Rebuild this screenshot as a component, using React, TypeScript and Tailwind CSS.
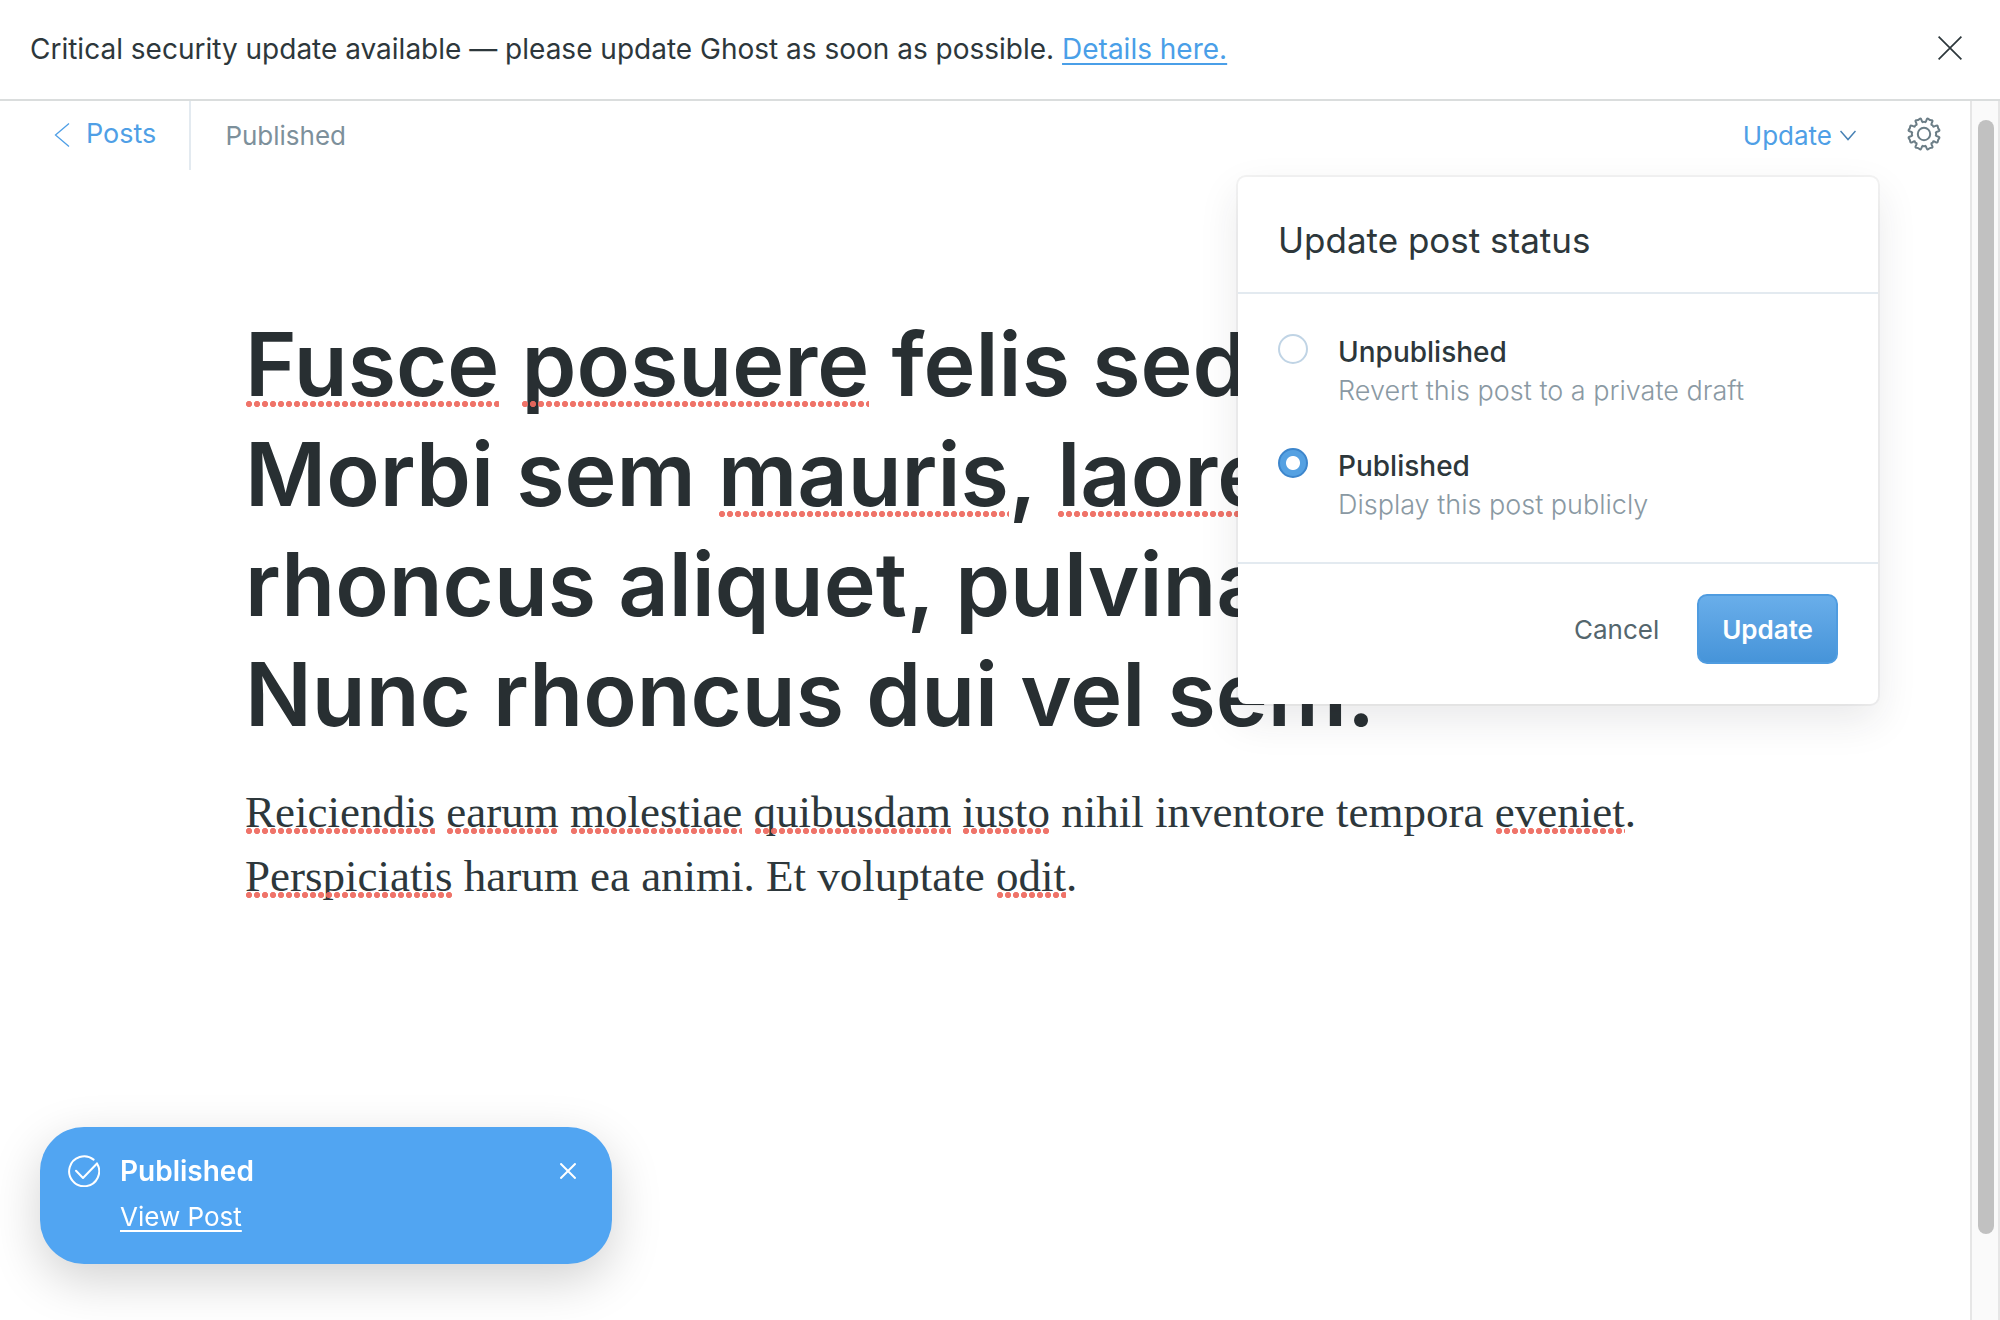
import { useState } from "react";

const MISSPELT =
  "relative after:absolute after:inset-x-0 after:h-[6px] after:content-[''] after:bg-[radial-gradient(circle,#ee6a5fee_2.8px,transparent_3.3px)] after:bg-[length:8px_6px] after:bg-repeat-x";

function Word({ children, large = false }: { children: string; large?: boolean }) {
  return (
    <span className={`${MISSPELT} ${large ? "after:bottom-[10px]" : "after:bottom-[3px]"}`}>
      {children}
    </span>
  );
}

function CloseIcon({ className }: { className: string }) {
  return (
    <svg className={className} viewBox="0 0 24 24" fill="none" stroke="currentColor" aria-hidden="true">
      <path d="M0.6 0.6 23.4 23.4M23.4 0.6 0.6 23.4" />
    </svg>
  );
}

/* Outline of an eight-toothed gear: a closed quadratic spline round (16, 16). */
function gearPath() {
  const pts: [number, number][] = [];
  for (let tooth = 0; tooth < 8; tooth++) {
    const middle = 22.5 + tooth * 45;
    for (const [offset, radius] of [[-14, 11.4], [-11.5, 16.6], [0, 15], [11.5, 16.6], [14, 11.4], [22.5, 12.6]]) {
      const a = ((middle + offset) * Math.PI) / 180;
      pts.push([16 + radius * Math.cos(a), 16 + radius * Math.sin(a)]);
    }
  }
  const mid = (i: number) => {
    const [a, b] = [pts[i % pts.length], pts[(i + 1) % pts.length]];
    return `${((a[0] + b[0]) / 2).toFixed(2)} ${((a[1] + b[1]) / 2).toFixed(2)}`;
  };
  return (
    `M${mid(pts.length - 1)}` +
    pts.map((p, i) => `Q${p[0].toFixed(2)} ${p[1].toFixed(2)} ${mid(i)}`).join("") +
    "Z"
  );
}

function GearIcon() {
  return (
    <svg className="size-8 overflow-visible" viewBox="0 0 32 32" fill="none" stroke="currentColor" strokeWidth="2" strokeLinejoin="round" aria-hidden="true">
      <circle cx="16" cy="16" r="6.2" />
      <path d={gearPath()} />
    </svg>
  );
}

const OPTIONS = [
  { id: "unpublished", title: "Unpublished", note: "Revert this post to a private draft" },
  { id: "published", title: "Published", note: "Display this post publicly" },
];

function StatusMenu() {
  const [status, setStatus] = useState("published");
  return (
    <section className="absolute right-[92px] top-[76px] z-10 w-[640px] rounded-lg bg-white shadow-[0_0_0_2px_rgba(39,44,46,0.05),0_16px_40px_rgba(39,44,46,0.10)]">
      <h2 className="border-b-2 border-[#e3eaf0] px-10 pt-[39px] pb-7 text-[35px] leading-12">Update post status</h2>
      <div className="flex flex-col gap-9 px-10 pt-10 pb-9">
        {OPTIONS.map((o) => (
          <div key={o.id} className="flex gap-[30px]">
            <input
              type="radio"
              id={o.id}
              name="status"
              checked={status === o.id}
              onChange={() => setStatus(o.id)}
              className="size-[30px] shrink-0 appearance-none rounded-full border-2 border-[#c0d4e5] bg-white checked:border-[#3d86cc] checked:bg-[radial-gradient(circle,#fff_6.5px,#55a1e2_7.5px)]"
            />
            <label htmlFor={o.id} className="flex flex-col">
              <span className="text-[28px] leading-9 font-medium">{o.title}</span>
              <span className="text-[27px] leading-[42px] font-light text-[#8a99a3]">{o.note}</span>
            </label>
          </div>
        ))}
      </div>
      <div className="flex items-center justify-end gap-[38px] border-t-2 border-[#e3eaf0] px-10 pt-[30px] pb-10">
        <button type="button" className="text-[26px] text-[#54666d]">Cancel</button>
        <button type="button" className="h-[70px] rounded-[10px] border-2 border-[#4f9ce0] bg-linear-to-b from-[#69aeea] to-[#4694d9] px-[23px] text-[26px] font-semibold text-white">
          Update
        </button>
      </div>
    </section>
  );
}

function Toast() {
  return (
    <aside className="fixed bottom-14 left-10 z-20 flex w-[572px] items-start rounded-[44px] bg-[#51a5f2] px-7 pt-6 pb-[27px] text-white shadow-[0_16px_50px_rgba(0,0,0,0.18)]">
      <svg className="mt-1 size-8 shrink-0" viewBox="0 0 32 32" fill="none" stroke="currentColor" strokeWidth="2" strokeLinecap="round" strokeLinejoin="round" aria-hidden="true">
        <path d="M25.6 4.6A15 15 0 1 0 29 8.5" />
        <path d="M8 15.8 15 23 29 8.5" />
      </svg>
      <div className="ml-5 flex-1">
        <p className="text-[28px] leading-10 font-semibold">Published</p>
        <a href="#post" className="block pt-1.5 text-[26px] leading-10 underline decoration-2 underline-offset-4">View Post</a>
      </div>
      <button type="button" aria-label="Dismiss" className="mt-3 mr-2">
        <CloseIcon className="size-4 stroke-[3]" />
      </button>
    </aside>
  );
}

export default function App() {
  return (
    <div className="flex min-h-screen flex-col bg-white font-['Inter',sans-serif] text-[#2d373b]">
      <div className="flex items-center justify-between border-b-2 border-[#dadddd] py-7 pr-[38px] pl-[30px]">
        <p className="text-[28px] leading-[43px]">
          Critical security update available — please update Ghost as soon as possible.{" "}
          <a href="#details" className="text-[#4a9fe8] underline decoration-2 underline-offset-4">Details here.</a>
        </p>
        <button type="button" aria-label="Close" className="pb-1">
          <CloseIcon className="size-6 stroke-[1.7]" />
        </button>
      </div>

      <div className="flex flex-1">
        <main className="relative flex-1">
          <header className="flex h-[69px] items-center justify-between pr-[30px]">
            <div className="flex h-full items-center">
              <a href="#posts" className="flex h-full items-center gap-4 border-r-2 border-[#e3eaf0] pr-[33px] pb-0.5 pl-[54px] text-[27px] text-[#4f9fe6]">
                <svg className="h-6 w-4" viewBox="0 0 16 24" fill="none" stroke="currentColor" strokeWidth="1.3" aria-hidden="true">
                  <path d="M15 .5 1.5 12 15 23.5" />
                </svg>
                Posts
              </a>
              <span className="pl-[34px] text-[26px] text-[#7d909b]">Published</span>
            </div>
            <div className="flex items-center gap-[52px]">
              <button type="button" className="flex items-center gap-2 text-[26px] text-[#4f9fe6]">
                Update
                <svg className="h-[11px] w-4 text-[#4680b4]" viewBox="0 0 16 11" fill="none" stroke="currentColor" strokeWidth="1.5" aria-hidden="true">
                  <path d="M.5 1 8 9.5 15.5 1" />
                </svg>
              </button>
              <button type="button" aria-label="Settings" className="pb-[3px] text-[#6b7d86]">
                <GearIcon />
              </button>
            </div>
          </header>

          <StatusMenu />

          <article className="pt-[139px] pl-[245px]">
            <h1 className="text-[88px] leading-[110px] font-semibold whitespace-nowrap text-[#282f32]">
              <Word large>Fusce</Word> <Word large>posuere</Word> felis sed
              <br />
              Morbi sem <Word large>mauris</Word>, <Word large>laoreet</Word>
              <br />
              rhoncus aliquet, pulvinar
              <br />
              Nunc rhoncus dui vel sem.
            </h1>
            <p className="pt-[31px] font-['Liberation_Serif',serif] text-[45px] leading-16 whitespace-nowrap">
              <Word>Reiciendis</Word> <Word>earum</Word> <Word>molestiae</Word> <Word>quibusdam</Word> <Word>iusto</Word> nihil
              inventore tempora <Word>eveniet</Word>.
              <br />
              <Word>Perspiciatis</Word> harum ea animi. Et voluptate <Word>odit</Word>.
            </p>
          </article>
        </main>
        <div className="w-[30px] border-x-2 border-[#e6e6e6] bg-[#fafafa] px-[6px] pt-[19px] pb-[86px]">
          <div className="h-full min-w-4 rounded-lg bg-[#c1c1c1]" />
        </div>
      </div>
      <Toast />
    </div>
  );
}
